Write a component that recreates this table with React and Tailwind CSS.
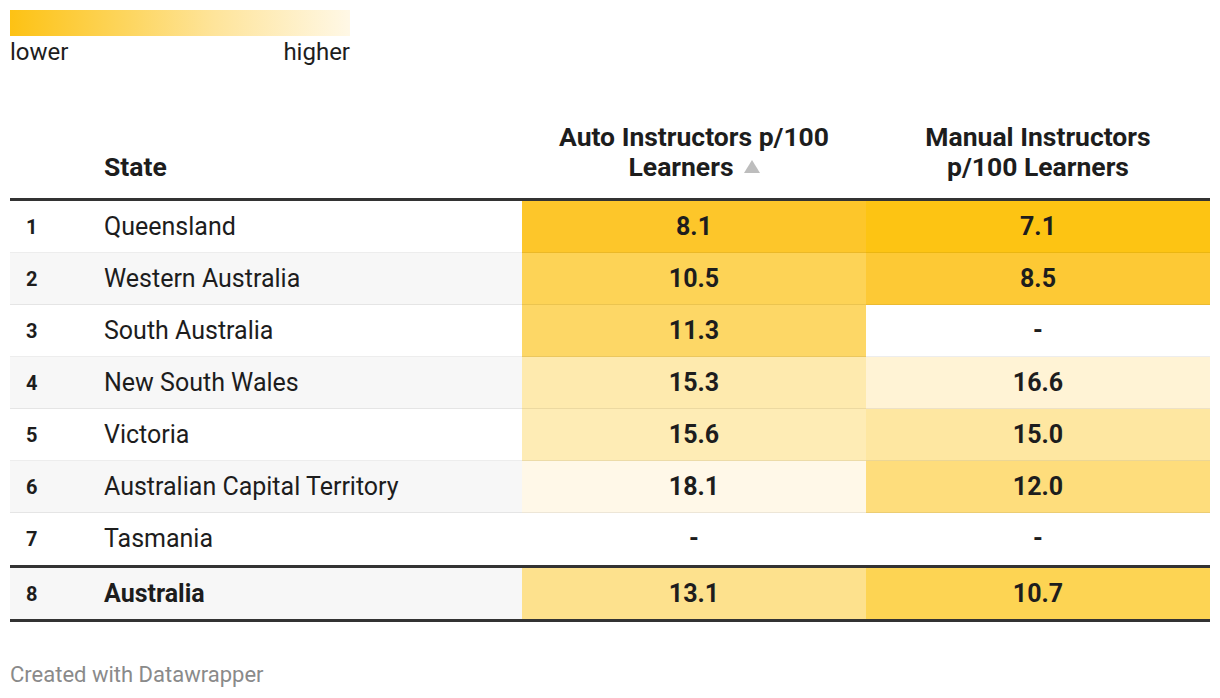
const rows = [
  { n: 1, state: "Queensland", auto: "8.1", autoBg: "bg-[#fdc62a]", manual: "7.1", manualBg: "bg-[#fdc413]" },
  { n: 2, state: "Western Australia", auto: "10.5", autoBg: "bg-[#fdd356]", manual: "8.5", manualBg: "bg-[#fdc935]" },
  { n: 3, state: "South Australia", auto: "11.3", autoBg: "bg-[#fdd766]", manual: "-", manualBg: "" },
  { n: 4, state: "New South Wales", auto: "15.3", autoBg: "bg-[#feeaae]", manual: "16.6", manualBg: "bg-[#fff3d5]" },
  { n: 5, state: "Victoria", auto: "15.6", autoBg: "bg-[#feecb5]", manual: "15.0", manualBg: "bg-[#fee7a1]" },
  { n: 6, state: "Australian Capital Territory", auto: "18.1", autoBg: "bg-[#fff8e8]", manual: "12.0", manualBg: "bg-[#fedd7c]" },
  { n: 7, state: "Tasmania", auto: "-", autoBg: "", manual: "-", manualBg: "" },
];

function SortArrow() {
  return (
    <svg className="inline-block ml-[10px] -mt-[6px] align-middle" width="16" height="13" viewBox="0 0 16 13">
      <path d="M8 0 L16 13 L0 13 Z" fill="#bdbdbd" />
    </svg>
  );
}

export default function App() {
  const th = "align-bottom pb-[16px] text-[26.5px] leading-[30px] font-bold text-[#1d1d1d] border-b-[3px] border-[#333]";
  return (
    <div className="w-[1220px] h-[698px] bg-white px-[10px] pt-[10px] text-[#1d1d1d] font-['Roboto',sans-serif]">
      {/* Legend */}
      <div className="w-[340px]">
        <div className="h-[26px] bg-[linear-gradient(to_right,#fdc214,#fdd660_35%,#fee49a_60%,#fff8e6)]" />
        <div className="flex justify-between text-[24px] leading-[32px] text-[#1d1d1d]">
          <span>lower</span>
          <span>higher</span>
        </div>
      </div>

      {/* Table */}
      <table className="mt-[54px] w-[1200px] border-separate border-spacing-0 table-fixed">
        <colgroup>
          <col className="w-[84px]" />
          <col className="w-[428px]" />
          <col className="w-[344px]" />
          <col className="w-[344px]" />
        </colgroup>
        <thead>
          <tr>
            <th className={th} />
            <th className={`${th} text-left pl-[10px]`}>State</th>
            <th className={th}>
              Auto Instructors p/100
              <br />
              Learners
              <SortArrow />
            </th>
            <th className={th}>
              Manual Instructors
              <br />
              p/100 Learners
            </th>
          </tr>
        </thead>
        <tbody>
          {rows.map((r) => {
            const b =
              r.n === 7
                ? "h-[55px] border-b-[3px] border-[#333]"
                : "h-[52px] border-b border-black/[0.07]";
            return (
              <tr key={r.n} className={r.n % 2 === 0 ? "bg-[#f7f7f7]" : "bg-white"}>
                <td className={`${b} pl-[16px] text-[20px] font-bold`}>{r.n}</td>
                <td className={`${b} pl-[10px] text-[25px]`}>{r.state}</td>
                <td className={`${b} text-center text-[25px] font-bold ${r.autoBg}`}>{r.auto}</td>
                <td className={`${b} text-center text-[25px] font-bold ${r.manualBg}`}>{r.manual}</td>
              </tr>
            );
          })}
          <tr className="bg-[#f7f7f7]">
            <td className="h-[54px] border-b-[3px] border-[#333] pl-[16px] text-[20px] font-bold">8</td>
            <td className="h-[54px] border-b-[3px] border-[#333] pl-[10px] text-[25px] font-bold">Australia</td>
            <td className="h-[54px] border-b-[3px] border-[#333] text-center text-[25px] font-bold bg-[#fde18d]">13.1</td>
            <td className="h-[54px] border-b-[3px] border-[#333] text-center text-[25px] font-bold bg-[#fdd453]">10.7</td>
          </tr>
        </tbody>
      </table>

      <div className="mt-[40px] text-[22px] leading-[26px] text-[#8a8a8a]">Created with Datawrapper</div>
    </div>
  );
}
